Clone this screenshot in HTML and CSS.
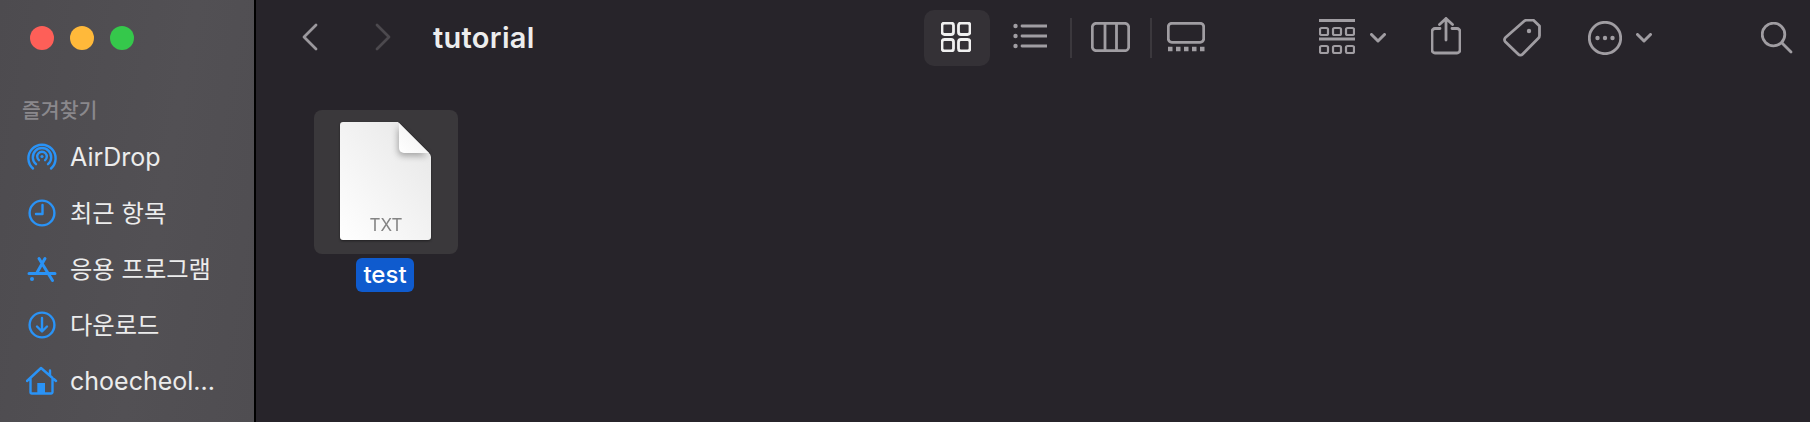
FILE: index.html
```html
<!DOCTYPE html>
<html lang="ko">

<head>
    <meta charset="UTF-8">
    <meta name="viewport" content="width=device-width, initial-scale=1.0">
    <title>tutorial</title>
    <link rel="stylesheet" href="styles.css">
</head>

<body>
    <div class="window">
        <aside class="sidebar">
            <div class="lights">
                <span class="light red"></span>
                <span class="light yellow"></span>
                <span class="light green"></span>
            </div>
            <h2 class="side-title">즐겨찾기</h2>
            <ul class="side-list">
                <li class="side-item">
                    <svg class="side-icon" viewBox="0 0 32 32">
                        <path d="M7 27.5A13.6 13.6 0 1 1 25 27.5" />
                        <path d="M10 23.2A9.2 9.2 0 1 1 22 23.2" />
                        <path d="M12.9 19.2A4.8 4.8 0 1 1 19.1 19.2" />
                        <circle class="fill" cx="16" cy="15.5" r="1.6" />
                    </svg>
                    <span class="latin">AirDrop</span>
                </li>
                <li class="side-item">
                    <svg class="side-icon" viewBox="0 0 32 32">
                        <circle cx="16" cy="16" r="12.4" />
                        <path d="M16.5 8v9H10" />
                    </svg>
                    <span class="korean">최근 항목</span>
                </li>
                <li class="side-item">
                    <svg class="side-icon" viewBox="0 0 32 32">
                        <path class="heavy" d="M13 5.5L26.5 27.5M19 5.5L10.5 20.5M3 20.5h26" />
                        <circle class="fill" cx="6" cy="26" r="2" />
                    </svg>
                    <span class="korean">응용 프로그램</span>
                </li>
                <li class="side-item">
                    <svg class="side-icon" viewBox="0 0 32 32">
                        <circle cx="16" cy="16" r="12.4" />
                        <path d="M16 9v13M11 17.5l5 5 5-5" />
                    </svg>
                    <span class="korean">다운로드</span>
                </li>
                <li class="side-item">
                    <svg class="side-icon" viewBox="0 0 32 32">
                        <path d="M1 16L15 3l15 13M4.5 13V27a1.5 1.5 0 0 0 1.5 1.5H25a1.5 1.5 0 0 0 1.5-1.5V13M24 5.5v5" />
                        <rect class="fill" x="11.3" y="18" width="7.7" height="10.5" />
                    </svg>
                    <span class="latin">choecheol...</span>
                </li>
            </ul>
        </aside>

        <main class="main">
            <header class="toolbar">
                <svg class="nav-icon back" viewBox="0 0 16 28">
                    <path d="M14 2L2 14l12 12" />
                </svg>
                <svg class="nav-icon forward" viewBox="0 0 16 28">
                    <path d="M2 2l12 12L2 26" />
                </svg>
                <h1 class="title">tutorial</h1>

                <div class="view-btn active">
                    <svg class="tool-icon grid" viewBox="0 0 30 30">
                        <rect x="1" y="1" width="11.5" height="11.5" rx="2.5" />
                        <rect x="17.5" y="1" width="11.5" height="11.5" rx="2.5" />
                        <rect x="1" y="17.5" width="11.5" height="11.5" rx="2.5" />
                        <rect x="17.5" y="17.5" width="11.5" height="11.5" rx="2.5" />
                    </svg>
                </div>
                <svg class="tool-icon list" viewBox="0 0 34 30">
                    <circle class="dot" cx="2.5" cy="4" r="2.2" />
                    <circle class="dot" cx="2.5" cy="14" r="2.2" />
                    <circle class="dot" cx="2.5" cy="24" r="2.2" />
                    <path d="M9 4h25M9 14h25M9 24h25" />
                </svg>
                <span class="sep first"></span>
                <svg class="tool-icon columns" viewBox="0 0 39 30">
                    <rect x="1.3" y="1.3" width="36.4" height="27.4" rx="4" />
                    <path d="M14 1v28M25.5 1v28" />
                </svg>
                <span class="sep second"></span>
                <svg class="tool-icon gallery" viewBox="0 0 38 30">
                    <rect x="1.3" y="1.3" width="35.4" height="19" rx="3.5" />
                    <path class="squares" d="M1 27h4.5M9 27h4.5M17 27h4.5M25 27h4.5M33 27h4.5" />
                </svg>

                <svg class="tool-icon group" viewBox="0 0 36 35">
                    <path d="M0 1.5h36M0 20h36" />
                    <g class="thin">
                        <rect x="1" y="9" width="8" height="7" rx="1.5" />
                        <rect x="14" y="9" width="8" height="7" rx="1.5" />
                        <rect x="27" y="9" width="8" height="7" rx="1.5" />
                        <rect x="1" y="27" width="8" height="7" rx="1.5" />
                        <rect x="14" y="27" width="8" height="7" rx="1.5" />
                        <rect x="27" y="27" width="8" height="7" rx="1.5" />
                    </g>
                </svg>
                <svg class="tool-icon chevron chevron-group" viewBox="0 0 16 10">
                    <path d="M1.5 1.5L8 8l6.5-6.5" />
                </svg>
                <svg class="tool-icon share" viewBox="0 0 30 38">
                    <path d="M9 11.5H4a3 3 0 0 0-3 3V33a3 3 0 0 0 3 3h22a3 3 0 0 0 3-3V14.5a3 3 0 0 0-3-3h-5" />
                    <path d="M15 23V1.5M8.5 7.5L15 1.5l6.5 6" />
                </svg>
                <svg class="tool-icon tag" viewBox="0 0 38 38">
                    <path d="M2.5 18.5L21 2.2A4 4 0 0 1 23.6 1.2H30.5L36.5 7V16.5A4 4 0 0 1 35.3 19.3L19.5 35.3A3 3 0 0 1 15.3 35.3L2.3 22.8A3 3 0 0 1 2.5 18.5z" />
                    <circle class="dot" cx="26" cy="12" r="2.2" />
                </svg>
                <svg class="tool-icon more" viewBox="0 0 34 34">
                    <circle cx="17" cy="17" r="15.7" />
                    <circle class="dot" cx="9.5" cy="17" r="2.2" />
                    <circle class="dot" cx="17" cy="17" r="2.2" />
                    <circle class="dot" cx="24.5" cy="17" r="2.2" />
                </svg>
                <svg class="tool-icon chevron chevron-more" viewBox="0 0 16 10">
                    <path d="M1.5 1.5L8 8l6.5-6.5" />
                </svg>
                <svg class="tool-icon search" viewBox="0 0 32 32">
                    <circle cx="12.5" cy="12.5" r="11.3" />
                    <path class="handle" d="M21 21l9 9" />
                </svg>
            </header>

            <section class="files">
                <div class="file">
                    <div class="file-tile">
                        <svg class="file-icon" viewBox="0 0 91 118">
                            <defs>
                                <linearGradient id="paper" x1="0" y1="1" x2="1" y2="0">
                                    <stop offset="0" stop-color="#ffffff" />
                                    <stop offset="1" stop-color="#e6e6e6" />
                                </linearGradient>
                                <linearGradient id="fold" x1="0" y1="1" x2="1" y2="0">
                                    <stop offset="0" stop-color="#ffffff" />
                                    <stop offset="1" stop-color="#eeeeee" />
                                </linearGradient>
                            </defs>
                            <path class="paper" d="M3 0H58L89 31a6 6 0 0 1 2 4V115a3 3 0 0 1-3 3H3a3 3 0 0 1-3-3V3a3 3 0 0 1 3-3z" />
                            <path class="fold" d="M59 1L89 31H64a5 5 0 0 1-5-5z" />
                            <text class="file-ext" x="46" y="109" text-anchor="middle">TXT</text>
                        </svg>
                    </div>
                    <span class="file-name">test</span>
                </div>
            </section>
        </main>
    </div>
</body>

</html>
```
FILE: styles.css
```css
* {
    box-sizing: border-box;
}

html,
body {
    margin: 0;
    height: 100%;
    overflow: hidden;
    background: #27242a;
}

body {
    font-family: Inter, "Noto Sans CJK KR", sans-serif;
}

.window {
    display: flex;
    height: 422px;
}

/* sidebar */
.sidebar {
    width: 256px;
    flex-shrink: 0;
    border-right: 2px solid #000;
    background: linear-gradient(100deg, #4d4b4f, #525054 60%, #4f4d51);
}

.lights {
    display: flex;
    gap: 16px;
    padding: 26px 0 0 30px;
}

.light {
    width: 24px;
    height: 24px;
    border-radius: 50%;
}

.red {
    background: #fe5f58;
}

.yellow {
    background: #ffb93a;
}

.green {
    background: #35c84b;
}

.side-title {
    margin: 48px 0 0 22px;
    font-size: 20.5px;
    line-height: 26px;
    font-weight: 500;
    color: #8a888c;
}

.side-list {
    list-style: none;
    margin: 5px 0 0;
    padding: 0;
}

.side-item {
    display: flex;
    align-items: center;
    gap: 12px;
    height: 56px;
    padding-left: 26px;
    font-size: 24.3px;
    color: #ececec;
}

.latin {
    font-size: 25px;
}

/* the CJK font sits low in its line box */
.korean {
    padding-bottom: 4px;
}

.side-icon {
    width: 32px;
    height: 32px;
    flex-shrink: 0;
    fill: none;
    stroke: #2a93f6;
    stroke-width: 2.4;
    stroke-linecap: round;
    stroke-linejoin: round;
}

.side-icon .heavy {
    stroke-width: 3;
}

.side-icon .fill {
    fill: #2a93f6;
    stroke: none;
}

/* toolbar */
.main {
    flex: 1;
    min-width: 0;
}

.toolbar {
    display: flex;
    align-items: center;
    height: 76px;
}

.toolbar svg {
    flex-shrink: 0;
    fill: none;
    stroke-linecap: round;
    stroke-linejoin: round;
}

.nav-icon {
    width: 16px;
    height: 28px;
    margin-bottom: 2px;
    stroke-width: 2.8;
}

.back {
    margin-left: 46px;
    stroke: #9b989d;
}

.forward {
    margin-left: 57px;
    stroke: #4c494e;
}

.title {
    margin: 0 0 2px 42px;
    width: 103px;
    font-size: 29px;
    letter-spacing: .3px;
    font-weight: 600;
    white-space: nowrap;
    color: #ededed;
}

.view-btn {
    display: flex;
    align-items: center;
    justify-content: center;
    width: 66px;
    height: 56px;
    margin-left: 388px;
    padding: 0 2px 2px 0;
    border-radius: 10px;
    background: #343136;
}

.tool-icon {
    stroke: #a09da2;
    stroke-width: 2.8;
}

.tool-icon .dot {
    fill: #a09da2;
    stroke: none;
}

.grid {
    width: 30px;
    height: 30px;
    stroke: #f0f0f0;
}

.list {
    width: 34px;
    height: 30px;
    margin-left: 23px;
    margin-bottom: 2px;
}

.sep {
    width: 2px;
    height: 40px;
    background: #3b383d;
}

.sep.first {
    margin-left: 23px;
}

.columns {
    width: 39px;
    height: 30px;
    margin-left: 19px;
    margin-bottom: 2px;
}

.sep.second {
    margin-left: 20px;
}

.gallery {
    width: 38px;
    height: 30px;
    margin-left: 15px;
    margin-bottom: 2px;
}

.gallery .squares {
    stroke-width: 4.5;
    stroke-linecap: butt;
}

.group {
    width: 36px;
    height: 35px;
    margin-left: 114px;
    margin-bottom: 3px;
}

.group path {
    stroke-linecap: butt;
}

.group .thin {
    stroke-width: 2.2;
}

.chevron {
    width: 16px;
    height: 10px;
    stroke-width: 3;
}

.chevron-group {
    margin-left: 15px;
}

.share {
    width: 30px;
    height: 38px;
    margin-left: 45px;
    margin-bottom: 4px;
}

.tag {
    width: 38px;
    height: 38px;
    margin-left: 42px;
    margin-bottom: 1px;
}

.more {
    width: 34px;
    height: 34px;
    margin-left: 47px;
    margin-bottom: 1px;
}

.chevron-more {
    margin-left: 14px;
}

.search {
    width: 32px;
    height: 32px;
    margin-left: 109px;
    margin-bottom: 1px;
}

/* files */
.files {
    padding: 34px 0 0 58px;
}

.file {
    display: flex;
    flex-direction: column;
    align-items: center;
    width: 144px;
}

.file-tile {
    display: flex;
    justify-content: center;
    width: 144px;
    height: 144px;
    padding: 12px 1px 0 0;
    border-radius: 8px;
    background: #3a383b;
}

.file-icon {
    width: 91px;
    height: 118px;
    overflow: visible;
    filter: drop-shadow(0 1px 1px rgba(0, 0, 0, .45));
}

.paper {
    fill: url(#paper);
}

.fold {
    fill: url(#fold);
    filter: drop-shadow(-1px 3px 3px rgba(0, 0, 0, .3));
}

.file-ext {
    font-family: Inter, sans-serif;
    font-size: 17px;
    fill: #848484;
}

.file-name {
    margin: 4px 2px 0 0;
    padding: 0 7px;
    height: 34px;
    line-height: 33px;
    border-radius: 6px;
    background: #0f5bce;
    font-size: 24px;
    font-weight: 500;
    color: #fff;
}
```
